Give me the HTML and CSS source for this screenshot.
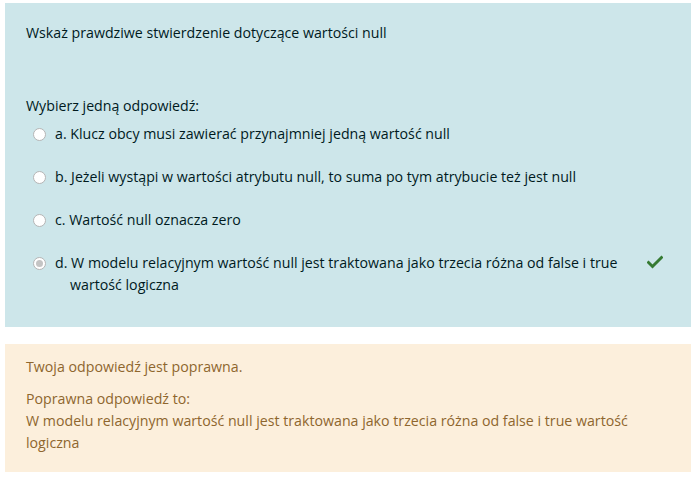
FILE: index.html
```html
<!DOCTYPE html>
<html lang="pl">
<head>
<meta charset="utf-8">
<link rel="stylesheet" href="styles.css">
</head>
<body>
<div class="page">
  <div class="formulation">
    <div class="qtext">Wskaż prawdziwe stwierdzenie dotyczące wartości null</div>
    <div class="prompt">Wybierz jedną odpowiedź:</div>
    <div class="answers">
      <div class="answer">
        <span class="radio"></span>
        <span class="label">a. Klucz obcy musi zawierać przynajmniej jedną wartość null</span>
      </div>
      <div class="answer">
        <span class="radio"></span>
        <span class="label">b. Jeżeli wystąpi w wartości atrybutu null, to suma po tym atrybucie też jest null</span>
      </div>
      <div class="answer">
        <span class="radio"></span>
        <span class="label">c. Wartość null oznacza zero</span>
      </div>
      <div class="answer">
        <span class="radio checked"></span>
        <span class="label label-d">d. W modelu relacyjnym wartość null jest traktowana jako trzecia różna od false i true <span class="indent">wartość logiczna</span></span>
        <svg class="check" width="16" height="14" viewBox="0 0 16 14"><path d="M1.5 7.5 L5.5 11.5 L14.5 2.5" fill="none" stroke="#357a32" stroke-width="3" stroke-linecap="square"/></svg>
      </div>
    </div>
  </div>
  <div class="outcome">
    <div class="feedback">Twoja odpowiedź jest poprawna.</div>
    <div class="right">Poprawna odpowiedź to:<br>W modelu relacyjnym wartość null jest traktowana jako trzecia różna od false i true wartość logiczna</div>
  </div>
</div>
</body>
</html>
```

FILE: styles.css
```css
html, body {
  margin: 0;
  padding: 0;
  background: #ffffff;
}
.page {
  padding: 3px 6px 0 5px;
  font-family: "Open Sans", "Noto Sans", sans-serif;
  font-size: 14.2px;
  line-height: 22px;
}
.formulation {
  background: #cde6ea;
  color: #001a1e;
  padding: 19px 21px 31px 21px;
}
.qtext {
  margin-bottom: 51px;
}
.prompt {
  margin-bottom: 6px;
}
.answers {
  display: flex;
  flex-direction: column;
  gap: 21px;
}
.answer {
  display: flex;
  align-items: flex-start;
  padding-left: 7px;
}
.radio {
  flex: none;
  width: 11px;
  height: 11px;
  margin-top: 5px;
  margin-right: 9px;
  border: 1px solid #b5b5b5;
  border-radius: 50%;
  background: #ffffff;
  position: relative;
}
.radio.checked::after {
  content: "";
  position: absolute;
  left: 2px;
  top: 2px;
  width: 7px;
  height: 7px;
  border-radius: 50%;
  background: #c4c4c4;
}
.label-d {
  width: 575px;
}
.indent {
  padding-left: 15px;
}
.check {
  flex: none;
  margin-left: 17px;
  margin-top: 3px;
}
.outcome {
  margin-top: 17px;
  background: #fcefdc;
  color: #8e662e;
  padding: 12px 21px 18px 21px;
}
.feedback {
  margin-bottom: 10px;
}
```
